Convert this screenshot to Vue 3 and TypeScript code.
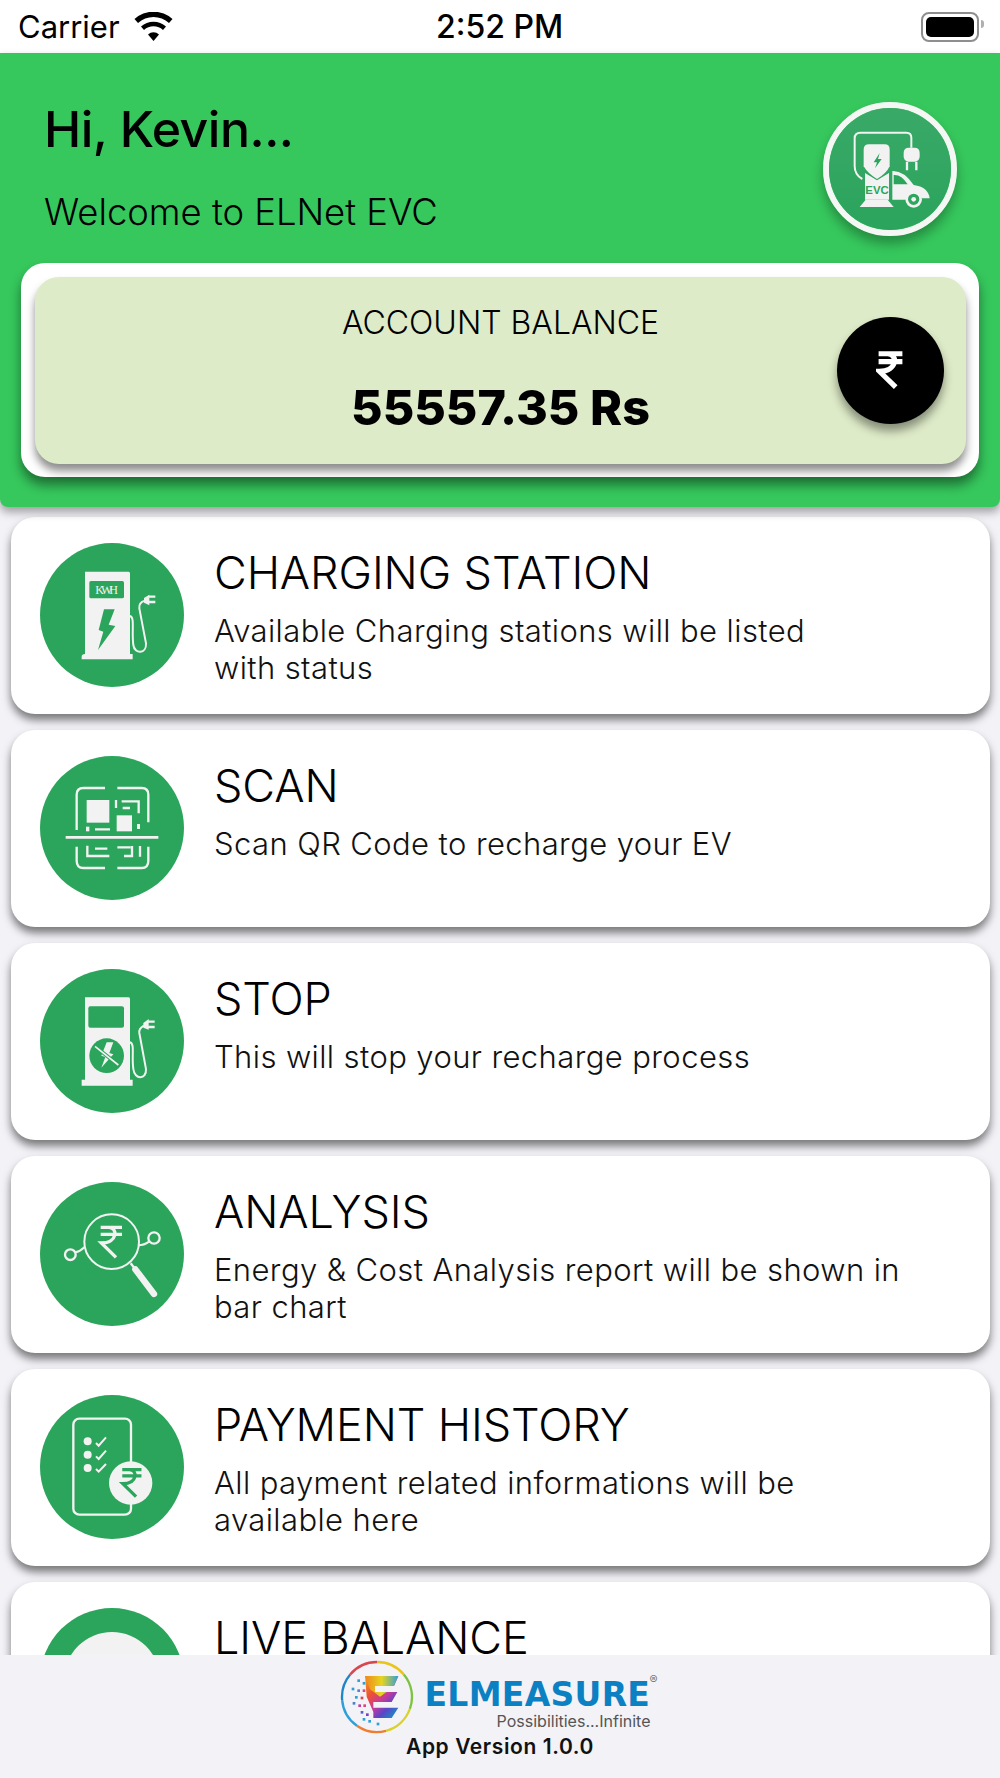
<script setup lang="ts">
interface MenuItem {
  title: string
  lines: string[]
  icon: string
  box: string
}

const items: MenuItem[] = [
  { title: 'CHARGING STATION', lines: ['Available Charging stations will be listed', 'with status'], icon: 'station', box: '30 39 432 432' },
  { title: 'SCAN', lines: ['Scan QR Code to recharge your EV'], icon: 'scan', box: '30 36 432 432' },
  { title: 'STOP', lines: ['This will stop your recharge process'], icon: 'stop', box: '30 30 432 432' },
  { title: 'ANALYSIS', lines: ['Energy & Cost Analysis report will be shown in', 'bar chart'], icon: 'analysis', box: '30 24 432 432' },
  { title: 'PAYMENT HISTORY', lines: ['All payment related informations will be', 'available here'], icon: 'payment', box: '30 21 432 432' },
  { title: 'LIVE BALANCE', lines: ['Live balance will be shown here'], icon: 'live', box: '30 15 432 432' },
]

const rupee = 'M212 160H276M212 181H276M236 160C264 160 264 207 214 207L258 250'

// logo ring, start/end angle in degrees from the top, clockwise
const ringColors = [
  { from: 0, to: 50, color: '#e9c41d' },
  { from: 50, to: 110, color: '#7fc242' },
  { from: 110, to: 165, color: '#d9d22a' },
  { from: 165, to: 215, color: '#ee7d2f' },
  { from: 215, to: 265, color: '#2f9fd8' },
  { from: 265, to: 310, color: '#1f86c6' },
  { from: 310, to: 360, color: '#d8464f' },
]

function ringArc(from: number, to: number) {
  const r = 105
  const pt = (a: number) => {
    const t = ((a - 90) * Math.PI) / 180
    return `${171 + r * Math.cos(t)} ${173 + r * Math.sin(t)}`
  }
  return `M${pt(from)}A${r} ${r} 0 0 1 ${pt(to)}`
}

const logoDots = [
  [112, 120, '#2f9fd8'], [128, 128, '#2f9fd8'], [95, 145, '#2f9fd8'], [112, 150, '#5a7fd0'], [128, 150, '#e0457b'],
  [105, 170, '#2f9fd8'], [122, 172, '#d8464f'], [98, 188, '#4a7fd0'], [115, 195, '#c03fa0'], [130, 195, '#e0457b'],
  [122, 215, '#5a5fd0'], [138, 222, '#7a3fc0'], [128, 236, '#2f9fd8'], [145, 242, '#2f9fd8'], [170, 250, '#2f9fd8'],
] as const
</script>

<template>
  <div class="screen">
    <div class="status">
      <div class="status__left">
        <span>Carrier</span>
        <svg class="wifi" viewBox="0 0 40 30" aria-hidden="true">
          <path d="M20 29 14.5 22.5a8 8 0 0 1 11 0Z" fill="#000" />
          <path d="M10.5 18a14 14 0 0 1 19 0l3-3.6a19 19 0 0 0-25 0Z" fill="#000" />
          <path d="M4.500 11a23 23 0 0 1 31 0l3.500-3.900a28 28 0 0 0-38 0Z" fill="#000" />
        </svg>
      </div>
      <span class="status__time">2:52 PM</span>
      <div class="battery"><div class="battery__fill"></div></div>
    </div>

    <header class="head">
      <div class="head__top">
        <div>
          <div class="head__hi">Hi, Kevin...</div>
          <div class="head__welcome">Welcome to ELNet EVC</div>
        </div>
        <div class="avatar">
          <svg viewBox="88 51 366 366" aria-hidden="true">
            <defs>
              <linearGradient id="avatarBg" x1="0" y1="0" x2="0" y2="1">
                <stop offset="0" stop-color="#3aa968" />
                <stop offset="1" stop-color="#2aa45c" />
              </linearGradient>
            </defs>
            <circle cx="271" cy="234" r="193" fill="url(#avatarBg)" />
            <path d="M188 264Q165 252 165 225V142Q165 125 182 125H320Q335 125 335 140V170" fill="none" stroke="#f2f2f2" stroke-width="6" />
            <path d="M312 186Q312 170 328 170H344Q360 170 360 186V196Q360 210 346 212H326Q312 210 312 196Z" fill="#f2f2f2" />
            <path d="M322 212V238M350 212V238" stroke="#f2f2f2" stroke-width="7" />
            <path d="M192 176Q192 160 208 160H255Q270 160 270 176V226Q260 248 232 264Q205 248 192 226Z" fill="#f2f2f2" />
            <path d="M240 186 222 214H232L226 232 246 204H235Z" fill="#2ba55b" />
            <path d="M196 246 232 268 268 246V326H196Z" fill="#f2f2f2" />
            <path d="M198 326H264L282 348H180Z" fill="#f2f2f2" />
            <text x="232" y="310" class="avatar__evc" text-anchor="middle">EVC</text>
            <path d="M278 240Q312 238 342 282Q386 288 390 322H366A25 25 0 0 0 318 326H278Z" fill="#f2f2f2" />
            <path d="M282 252Q305 250 324 280H282Z" fill="#2ba55b" />
            <circle cx="342" cy="325" r="21" fill="none" stroke="#f2f2f2" stroke-width="8" />
            <circle cx="342" cy="325" r="7" fill="#f2f2f2" />
          </svg>
        </div>
      </div>

      <div class="balance">
        <div class="balance__inner">
          <div class="balance__label">ACCOUNT BALANCE</div>
          <div class="balance__value">55557.35 Rs</div>
          <div class="balance__btn">
            <svg viewBox="205 153 78 104" aria-hidden="true">
              <path :d="rupee" fill="none" stroke="#fff" stroke-width="14" />
            </svg>
          </div>
        </div>
      </div>
    </header>

    <main class="list">
      <div v-for="item in items" :key="item.title" class="card">
        <svg class="card__icon" :viewBox="item.box" aria-hidden="true">
          <circle cx="246" :cy="Number(item.box.split(' ')[1]) + 216" r="216" fill="#2ba55b" />

          <g v-if="item.icon === 'station'">
            <path d="M165 125H296Q300 125 300 130V372H308V388H155V380Q155 372 165 372Z" fill="#f2f2f2" />
            <rect x="178" y="153" width="104" height="52" rx="5" fill="#2ba55b" />
            <text x="230" y="191" class="kwh" text-anchor="middle" textLength="68">KWH</text>
            <path d="M222 238H254L236 284 256 288 204 360 220 305 206 300Z" fill="#2ba55b" />
            <path d="M298 258C316 258 304 300 310 345 314 374 350 372 348 340L328 235C326 220 335 215 345 212" fill="none" stroke="#f2f2f2" stroke-width="6" />
            <path d="M342 204 358 194V226L342 218Z" fill="#f2f2f2" />
            <path d="M356 200H376M356 216H376" stroke="#f2f2f2" stroke-width="7" />
          </g>

          <g v-else-if="item.icon === 'scan'" fill="none" stroke="#f2f2f2" stroke-width="7">
            <path d="M225 132H160Q140 132 140 152V258M262 132H335Q355 132 355 152V235" />
            <path d="M140 308V350Q140 372 160 372H225M262 372H335Q355 372 355 350V308" />
            <path d="M107 280H385" stroke-width="8" />
            <rect x="170" y="168" width="68" height="68" fill="#f2f2f2" stroke="none" />
            <rect x="260" y="214" width="46" height="48" fill="#f2f2f2" stroke="none" />
            <path d="M258 168V192M275 172H326V208M278 192H300M195 256H240" />
            <rect x="321" y="240" width="9" height="15" fill="#f2f2f2" stroke="none" />
            <rect x="168" y="248" width="10" height="14" fill="#f2f2f2" stroke="none" />
            <path d="M172 305V336H238M195 314H232M262 310H302M282 336H306V306M330 306V338" />
          </g>

          <g v-else-if="item.icon === 'stop'">
            <path d="M165 115H296Q300 115 300 120V362H308V380H155V362H165Z" fill="#f2f2f2" />
            <rect x="175" y="142" width="107" height="64" rx="6" fill="#2ba55b" />
            <circle cx="230" cy="290" r="52" fill="#2ba55b" />
            <path d="M230 250H250L238 282 250 286 214 326 226 294 214 290Z" fill="#f2f2f2" />
            <path d="M195 262 265 318" stroke="#2ba55b" stroke-width="11" />
            <path d="M195 262 265 318" stroke="#f2f2f2" stroke-width="5" />
            <path d="M298 250C316 250 304 290 310 330 314 364 350 362 348 330L328 222C326 208 335 204 342 200" fill="none" stroke="#f2f2f2" stroke-width="6" />
            <path d="M340 192 356 180V212L340 206Z" fill="#f2f2f2" />
            <path d="M354 188H374M354 204H374" stroke="#f2f2f2" stroke-width="7" />
          </g>

          <g v-else-if="item.icon === 'analysis'" fill="none" stroke="#f2f2f2">
            <circle cx="245" cy="203" r="82" stroke-width="6" />
            <path :d="rupee" stroke-width="10" />
            <path d="M302 268 316 286" stroke-width="7" />
            <path d="M316 286 372 360" stroke-width="19" stroke-linecap="round" />
            <circle cx="121" cy="242" r="16" stroke-width="7" />
            <path d="M136 235Q150 232 165 218" stroke-width="6" />
            <circle cx="372" cy="192" r="17" stroke-width="7" />
            <path d="M325 214Q342 214 357 203" stroke-width="6" />
          </g>

          <g v-else-if="item.icon === 'payment'">
            <rect x="130" y="92" width="173" height="288" rx="18" fill="none" stroke="#f2f2f2" stroke-width="7" />
            <circle cx="173" cy="160" r="12" fill="#f2f2f2" />
            <circle cx="173" cy="200" r="12" fill="#f2f2f2" />
            <circle cx="173" cy="240" r="12" fill="#f2f2f2" />
            <path d="M198 165 206 173 228 148M198 205 206 213 228 188M198 243 206 251 228 228" fill="none" stroke="#f2f2f2" stroke-width="6" />
            <circle cx="302" cy="285" r="65" fill="#f2f2f2" />
            <path :d="rupee" transform="translate(86 101) scale(.9)" fill="none" stroke="#2ba55b" stroke-width="11" />
          </g>

          <g v-else>
            <circle cx="246" cy="231" r="144" fill="#f2f2f2" />
          </g>
        </svg>
        <div class="card__body">
          <div class="card__title">{{ item.title }}</div>
          <div v-for="line in item.lines" :key="line" class="card__line">{{ line }}</div>
        </div>
      </div>
    </main>

    <footer class="foot">
      <div class="logo">
        <svg class="logo__mark" viewBox="60 62 222 222" aria-hidden="true">
          <defs>
            <linearGradient id="logoE" x1="0" y1="0" x2=".8" y2="1">
              <stop offset="0" stop-color="#f0a81e" />
              <stop offset=".35" stop-color="#ee4f35" />
              <stop offset=".6" stop-color="#c43a9e" />
              <stop offset=".8" stop-color="#5a45c8" />
              <stop offset="1" stop-color="#1f86c6" />
            </linearGradient>
            <linearGradient id="logoTop" x1="0" y1="0" x2="1" y2="0">
              <stop offset="0" stop-color="#f0861e" />
              <stop offset=".5" stop-color="#e6d51e" />
              <stop offset="1" stop-color="#2f9fd8" />
            </linearGradient>
          </defs>
          <path v-for="seg in ringColors" :key="seg.from" :d="ringArc(seg.from, seg.to)" fill="none" :stroke="seg.color" stroke-width="7" />
          <path d="M140 172 160 218V236H215L235 205H160V188H215L232 158H165V140H222L235 110H135Z" fill="url(#logoE)" />
          <path d="M135 110H235L222 140H165V158H200L180 172 150 150Z" fill="url(#logoTop)" />
          <rect v-for="d in logoDots" :key="`${d[0]}-${d[1]}`" :x="d[0]" :y="d[1]" width="8" height="8" :fill="d[2]" />
        </svg>
        <div class="logo__words">
          <div class="logo__name">ELMEASURE</div>
          <div class="logo__tag">Possibilities...Infinite</div>
          <span class="logo__reg">®</span>
        </div>
      </div>
      <div class="foot__ver">App Version 1.0.0</div>
    </footer>
  </div>
</template>

<style>
html,
body {
  margin: 0;
  background: #f2f2f7;
}
</style>

<style scoped>
.screen {
  width: 1000px;
  height: 1778px;
  display: flex;
  flex-direction: column;
  overflow: hidden;
  background: #f2f2f7;
  color: #000;
  font-family: Inter, "Liberation Sans", sans-serif;
}

.status {
  height: 53px;
  flex: none;
  display: flex;
  align-items: center;
  justify-content: space-between;
  position: relative;
  padding: 0 21px 0 18px;
  background: #fff;
  font-size: 31px;
}

.status__left {
  display: flex;
  align-items: center;
  gap: 13px;
}

.wifi {
  width: 41px;
  height: 30px;
}

.status__time {
  position: absolute;
  left: 436px;
  font-size: 32px;
  font-weight: 500;
}

.battery {
  position: relative;
  width: 48px;
  height: 20px;
  padding: 3px;
  border: 2px solid #8e8e8e;
  border-radius: 8px;
  box-sizing: content-box;
}

.battery::after {
  content: "";
  position: absolute;
  right: -7px;
  top: 6px;
  width: 3px;
  height: 8px;
  border-radius: 0 3px 3px 0;
  background: #b0b0b0;
}

.battery__fill {
  height: 100%;
  background: #000;
  border-radius: 5px;
}

.head {
  flex: none;
  height: 454px;
  box-sizing: border-box;
  position: relative;
  z-index: 2;
  background: #36c85d;
  border-radius: 0 0 8px 8px;
  box-shadow: 0 5px 10px rgba(0, 0, 0, 0.35);
}

.head__top {
  height: 210px;
  box-sizing: border-box;
  display: flex;
  justify-content: space-between;
  align-items: flex-start;
  padding: 49px 43px 0 44px;
}

.head__hi {
  font-size: 50px;
  line-height: 54px;
  font-weight: 500;
  letter-spacing: -0.5px;
}

.head__welcome {
  margin-top: 35px;
  font-size: 36.4px;
  line-height: 42px;
  font-weight: 300;
}

.avatar {
  width: 134px;
  height: 134px;
  box-sizing: border-box;
  border: 6px solid #f4f7f4;
  border-radius: 50%;
  overflow: hidden;
  box-shadow: 0 8px 12px rgba(0, 0, 0, 0.3);
}

.avatar svg {
  display: block;
  width: 100%;
  height: 100%;
}

.avatar__evc {
  font-family: "Liberation Sans", sans-serif;
  font-size: 34px;
  font-weight: 700;
  fill: #2ba55b;
}

.balance {
  height: 214px;
  margin: 0 21px;
  padding: 14px 13px 13px 14px;
  box-sizing: border-box;
  background: #fff;
  border-radius: 24px;
  box-shadow: 0 8px 12px rgba(0, 0, 0, 0.45);
}

.balance__inner {
  height: 100%;
  position: relative;
  box-sizing: border-box;
  padding-top: 28px;
  text-align: center;
  background: #deebc8;
  border-radius: 24px;
  box-shadow: 0 7px 8px rgba(0, 0, 0, 0.45);
}

.balance__label {
  font-size: 32px;
  line-height: 36px;
  font-weight: 300;
}

.balance__value {
  margin-top: 39px;
  font-size: 48.5px;
  line-height: 56px;
  font-weight: 800;
}

.balance__btn {
  position: absolute;
  right: 22px;
  top: 40px;
  width: 107px;
  height: 107px;
  display: flex;
  align-items: center;
  justify-content: center;
  border-radius: 50%;
  background: #000;
  box-shadow: 0 7px 10px rgba(0, 0, 0, 0.4);
}

.balance__btn svg {
  width: 29px;
  height: 39px;
}

.list {
  flex: 1;
  min-height: 0;
  overflow: hidden;
  display: flex;
  flex-direction: column;
  gap: 16px;
  padding: 10px 10px 0 11px;
}

.card {
  flex: none;
  height: 197px;
  box-sizing: border-box;
  display: flex;
  gap: 30px;
  padding: 26px 29px 0;
  background: #fff;
  border-radius: 24px;
  box-shadow: 0 6px 8px rgba(0, 0, 0, 0.5);
}

.card__icon {
  flex: none;
  width: 144px;
  height: 144px;
}

.card__body {
  padding-top: 3px;
}

.kwh {
  font-family: "Liberation Serif", serif;
  font-size: 36px;
  fill: #f2f2f2;
}

.card__title {
  font-size: 45px;
  line-height: 54px;
  font-weight: 300;
  letter-spacing: -0.1px;
  white-space: nowrap;
}

.card__line {
  font-size: 31px;
  line-height: 37px;
  font-weight: 300;
  letter-spacing: 0.4px;
  color: #111;
  white-space: nowrap;
}

.card__title + .card__line {
  margin-top: 12px;
}

.foot {
  flex: none;
  height: 123px;
  position: relative;
  z-index: 2;
  background: #f2f2f7;
  display: flex;
  flex-direction: column;
  align-items: center;
}

.logo {
  display: flex;
  gap: 11px;
  margin: 5px 10px 0 0;
}

.logo__mark {
  width: 74px;
  height: 74px;
}

.logo__words {
  position: relative;
  width: 226px;
  padding-top: 21px;
}

.logo__name {
  font-family: "DejaVu Sans", sans-serif;
  font-size: 33px;
  line-height: 28px;
  font-weight: 700;
  color: #0b80c2;
  letter-spacing: 0.3px;
  white-space: nowrap;
}

.logo__reg {
  position: absolute;
  left: 225px;
  top: 13px;
  font-size: 12px;
  line-height: 13px;
  color: #777;
}

.logo__tag {
  margin-top: 2px;
  font-size: 16px;
  line-height: 20px;
  font-weight: 400;
  color: #555;
  text-align: right;
  white-space: nowrap;
}

.foot__ver {
  font-size: 21px;
  line-height: 26px;
  font-weight: 600;
  letter-spacing: 0.6px;
  color: #111;
}
</style>
